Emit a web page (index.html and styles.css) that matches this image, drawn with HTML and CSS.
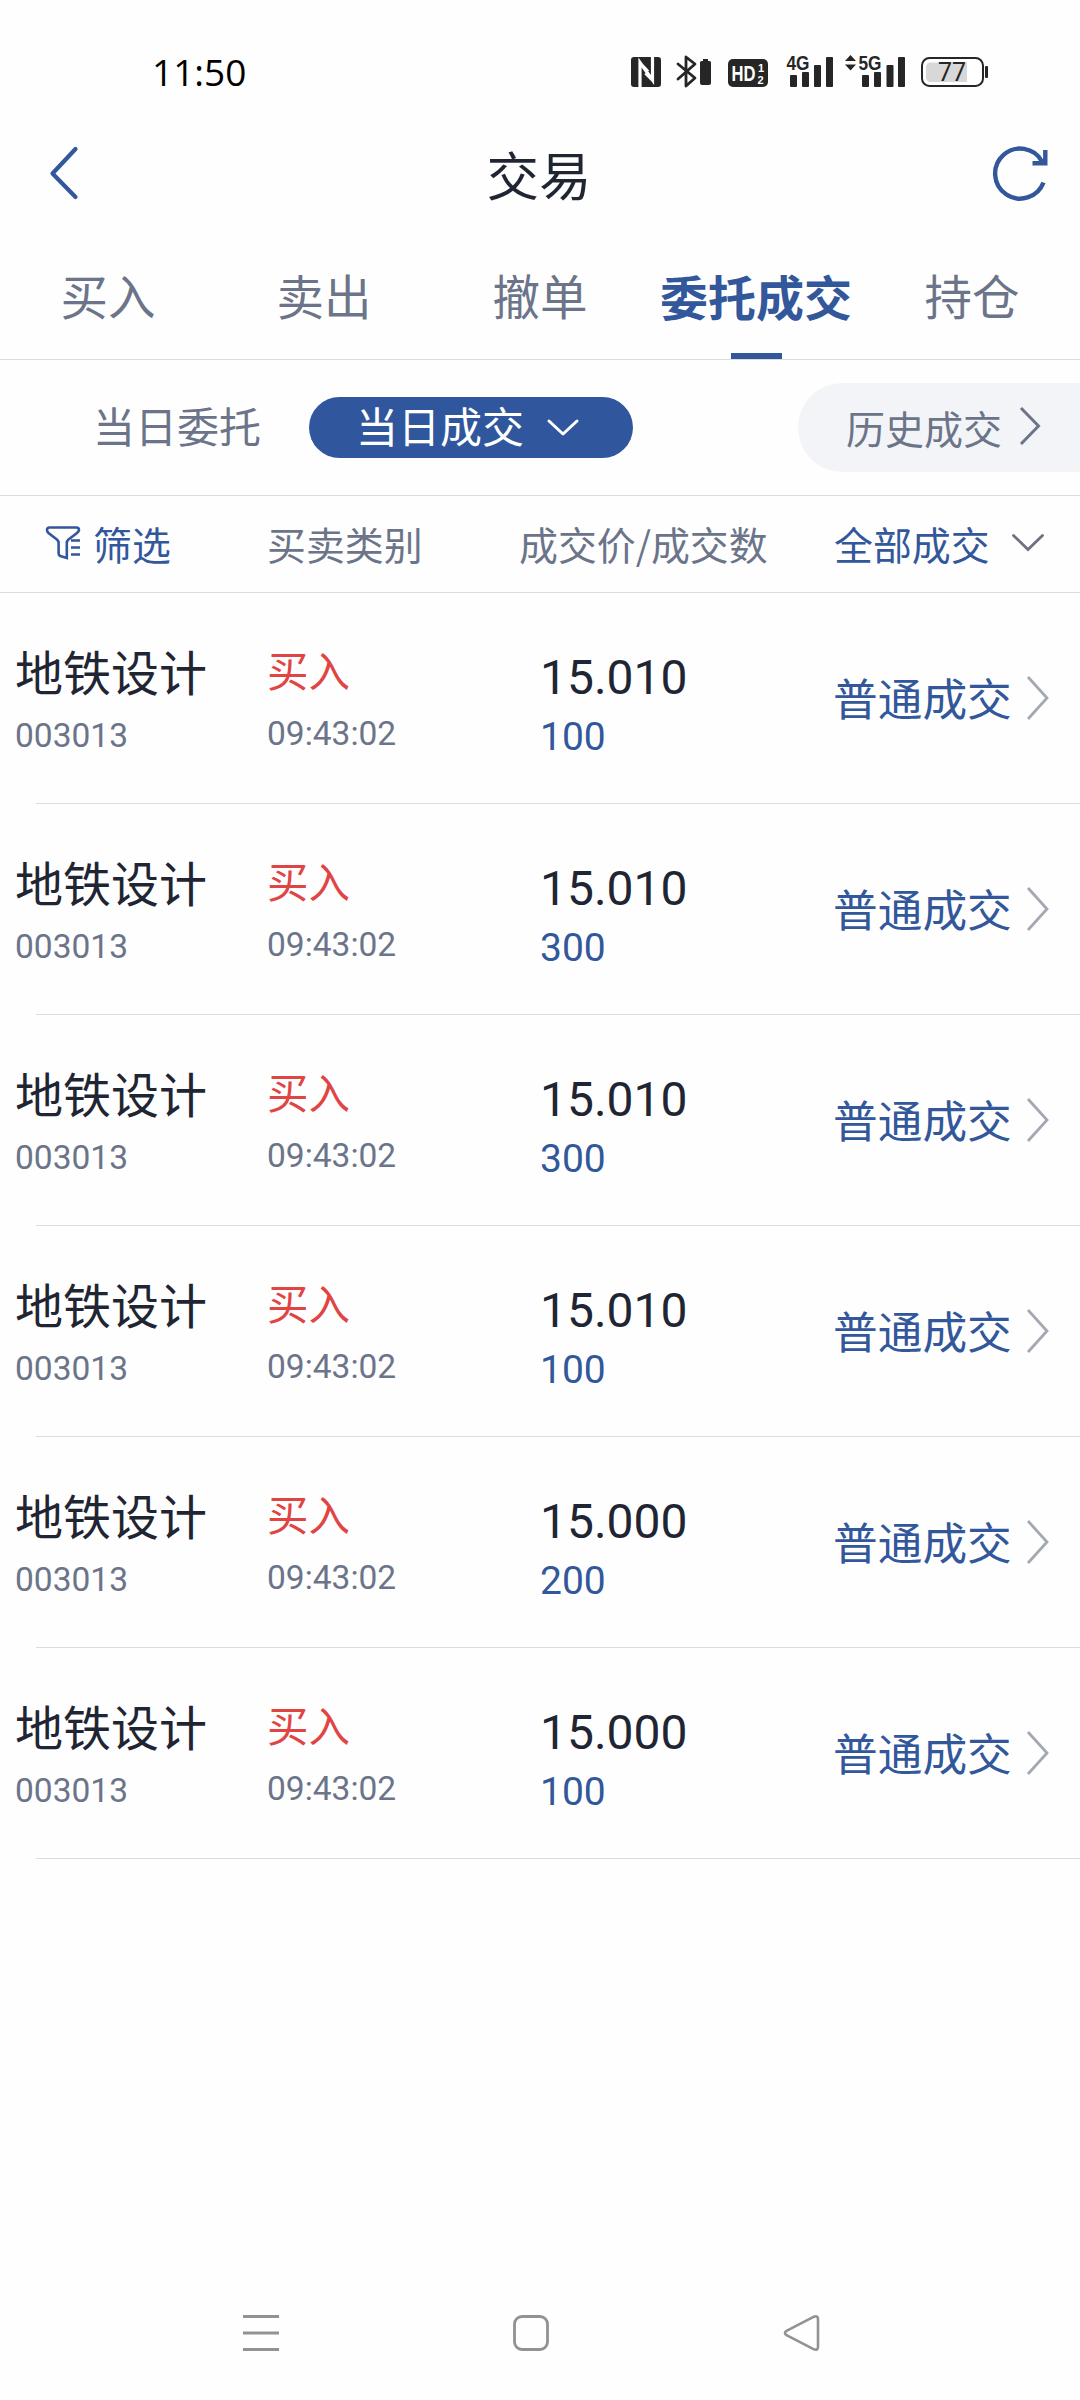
FILE: index.html
```html
<!DOCTYPE html>
<html lang="zh-CN">
<head>
<meta charset="utf-8">
<title>交易</title>
<link rel="stylesheet" href="styles.css">
</head>
<body>
<div class="screen">
  <div class="status">
    <span class="clock">11:50</span>
    <svg class="status-icons" width="360" height="38" viewBox="630 53 360 38">
      <rect x="631" y="57" width="30" height="30" rx="3" fill="#262626"/>
      <path d="M640 87V62.500l12.500 17.500V57M640 63l8 8.500M653 80.500l-7.500-7.500" fill="none" stroke="#fff" stroke-width="3.200"/>
      <path d="M678 64l17 14-9 8V57l9 7-17 15" fill="none" stroke="#262626" stroke-width="2.800" stroke-linejoin="round" stroke-linecap="round"/>
      <path d="M703 59h5v2h1.500q1.500 0 1.500 1.500v20.500q0 2-2 2h-7q-2 0-2-2v-20.500q0-1.500 1.500-1.500h1.500z" fill="#262626"/>
      <rect x="728" y="59" width="40" height="28" rx="5" fill="#262626"/>
      <text x="731.500" y="81" class="hd" textLength="24" lengthAdjust="spacingAndGlyphs">HD</text>
      <text x="758" y="71.500" class="hd-sub">1</text>
      <text x="757.500" y="83.500" class="hd-sub">2</text>
      <g fill="#262626">
        <text x="786.500" y="70" class="net" textLength="23" lengthAdjust="spacingAndGlyphs">4G</text>
        <rect x="790" y="75" width="7" height="12" rx="1"/><rect x="802" y="72" width="7" height="15" rx="1"/><rect x="814" y="65" width="7" height="22" rx="1"/><rect x="826" y="57" width="7" height="30" rx="1"/>
        <path d="M845 61l5.500-6 5.500 6zM845 64.500h11l-5.500 6z"/>
        <text x="858.500" y="70" class="net" textLength="23" lengthAdjust="spacingAndGlyphs">5G</text>
        <rect x="862" y="75" width="7" height="12" rx="1"/><rect x="874" y="72" width="7" height="15" rx="1"/><rect x="886.500" y="65" width="7" height="22" rx="1"/><rect x="898" y="57" width="7" height="30" rx="1"/>
      </g>
      <rect x="922" y="58" width="61" height="28" rx="7.500" fill="#fff" stroke="#262626" stroke-width="2"/>
      <path d="M967 62.500v19.500h-36q-5 0-5-5v-9.500q0-5 5-5z" fill="#d8d8d8"/>
      <rect x="985" y="66" width="3" height="12" rx="1" fill="#262626"/>
      <text x="952" y="81" class="charge" text-anchor="middle">77</text>
    </svg>
  </div>

  <header class="header">
    <svg class="back" width="34" height="56" viewBox="47 145.500 34 56"><path d="M75.500 148.500L52.500 173l23 23.500" fill="none" stroke="#32579b" stroke-width="4.200" stroke-linecap="round" stroke-linejoin="round"/></svg>
    <h1 class="title">交易</h1>
    <svg class="refresh" width="60" height="60" viewBox="991 144 60 60"><path d="M1043.500 182.500A25 25 0 1 1 1042 161.500M1032.500 163.300h12.800V150" fill="none" stroke="#32579b" stroke-width="4.400"/></svg>
  </header>

  <nav class="tabs">
    <span class="tab">买入</span>
    <span class="tab">卖出</span>
    <span class="tab">撤单</span>
    <span class="tab active">委托成交</span>
    <span class="tab">持仓</span>
  </nav>

  <div class="modes">
    <span class="mode">当日委托</span>
    <span class="mode current"><span>当日成交</span><svg width="34" height="20" viewBox="0 0 34 20"><path d="M3 3l14 13L31 3" fill="none" stroke="#fff" stroke-width="3" stroke-linecap="round" stroke-linejoin="round"/></svg></span>
    <span class="history"><span>历史成交</span><svg width="24" height="42" viewBox="0 0 24 42"><path d="M3 3l17.500 18L3 39" fill="none" stroke="#6b7489" stroke-width="3"/></svg></span>
  </div>

  <div class="columns">
    <span class="filter"><svg width="36" height="36" viewBox="45 526 36 36"><path d="M49.500 528.500h27q2.500 0 2.500 2.500-.3 1.500-2 3l-8.500 6.500q-1.700 1.400-1.700 3.500v15l-6.500-2q-1.700-.8-1.700-2.500v-10.500q0-2.100-1.700-3.500L48.500 534q-1.500-1.500-1.500-3 0-2.500 2.500-2.500zM71 541.500h9M71 548.500h9M71 555.500h9" fill="none" stroke="#32579b" stroke-width="2.600"/></svg>筛选</span>
    <span>买卖类别</span>
    <span class="price-head">成交价/成交数</span>
    <span class="all">全部成交<svg width="34" height="20" viewBox="0 0 34 20"><path d="M2.500 2.500l14.500 14L31.500 2.500" fill="none" stroke="#6f7180" stroke-width="2.800" stroke-linecap="round"/></svg></span>
  </div>

  <main class="list">
    <div class="row"><div class="stock"><b>地铁设计</b><i>003013</i></div><div class="side"><b>买入</b><i>09:43:02</i></div><div class="deal"><b>15.010</b><i>100</i></div><div class="kind"><span>普通成交</span><svg width="24" height="46" viewBox="0 0 24 46"><path d="M2 2l19 21L2 44" fill="none" stroke="#a3a8b3" stroke-width="2.800"/></svg></div></div>
    <div class="row"><div class="stock"><b>地铁设计</b><i>003013</i></div><div class="side"><b>买入</b><i>09:43:02</i></div><div class="deal"><b>15.010</b><i>300</i></div><div class="kind"><span>普通成交</span><svg width="24" height="46" viewBox="0 0 24 46"><path d="M2 2l19 21L2 44" fill="none" stroke="#a3a8b3" stroke-width="2.800"/></svg></div></div>
    <div class="row"><div class="stock"><b>地铁设计</b><i>003013</i></div><div class="side"><b>买入</b><i>09:43:02</i></div><div class="deal"><b>15.010</b><i>300</i></div><div class="kind"><span>普通成交</span><svg width="24" height="46" viewBox="0 0 24 46"><path d="M2 2l19 21L2 44" fill="none" stroke="#a3a8b3" stroke-width="2.800"/></svg></div></div>
    <div class="row"><div class="stock"><b>地铁设计</b><i>003013</i></div><div class="side"><b>买入</b><i>09:43:02</i></div><div class="deal"><b>15.010</b><i>100</i></div><div class="kind"><span>普通成交</span><svg width="24" height="46" viewBox="0 0 24 46"><path d="M2 2l19 21L2 44" fill="none" stroke="#a3a8b3" stroke-width="2.800"/></svg></div></div>
    <div class="row"><div class="stock"><b>地铁设计</b><i>003013</i></div><div class="side"><b>买入</b><i>09:43:02</i></div><div class="deal"><b>15.000</b><i>200</i></div><div class="kind"><span>普通成交</span><svg width="24" height="46" viewBox="0 0 24 46"><path d="M2 2l19 21L2 44" fill="none" stroke="#a3a8b3" stroke-width="2.800"/></svg></div></div>
    <div class="row"><div class="stock"><b>地铁设计</b><i>003013</i></div><div class="side"><b>买入</b><i>09:43:02</i></div><div class="deal"><b>15.000</b><i>100</i></div><div class="kind"><span>普通成交</span><svg width="24" height="46" viewBox="0 0 24 46"><path d="M2 2l19 21L2 44" fill="none" stroke="#a3a8b3" stroke-width="2.800"/></svg></div></div>
  </main>

  <footer class="system-nav">
    <svg width="38" height="40" viewBox="0 0 38 40"><path d="M1 3.500h36M1 20h36M1 36.500h36" stroke="#929292" stroke-width="3"/></svg>
    <svg width="38" height="40" viewBox="0 0 38 40"><rect x="2.500" y="3.500" width="33" height="33" rx="7.500" fill="none" stroke="#929292" stroke-width="2.800"/></svg>
    <svg width="38" height="40" viewBox="0 0 38 40"><path d="M4.500 17.800L32 3.700q4-1.400 4 2.600v27.400q0 4-4 2.600L4.500 22.200q-3-2.200 0-4.400z" fill="none" stroke="#929292" stroke-width="2.600" stroke-linejoin="round"/></svg>
  </footer>
</div>
</body>
</html>
```

FILE: styles.css
```css
* { box-sizing: border-box; }
body { margin: 0; background: #fefefe; }
svg { display: block; flex: none; }
b, i { font-weight: 400; font-style: normal; }

.screen {
  width: 1080px;
  height: 2400px;
  display: flex;
  flex-direction: column;
  overflow: hidden;
  background: #fefefe;
  color: #6b7489;
  font-family: "Noto Sans CJK SC", sans-serif;
  white-space: nowrap;
}

.status {
  height: 120px;
  padding: 53px 90px 0 152px;
  display: flex;
  justify-content: space-between;
  align-items: flex-start;
}
.clock { font: 37px/38px "Open Sans", sans-serif; color: #000; }
.hd { font: 700 22px "Liberation Sans", sans-serif; fill: #fff; }
.hd-sub { font: 700 11px "Liberation Sans", sans-serif; fill: #fff; }
.net { font: 700 21px "Liberation Sans", sans-serif; }
.charge { font: 25px Roboto, sans-serif; fill: #262626; }

.header {
  height: 108px;
  padding: 0 29px 0 47px;
  display: grid;
  grid-template-columns: 60px 1fr 60px;
  align-items: center;
}
.title {
  margin: 0;
  padding: 0 20px 2px 0;
  text-align: center;
  color: #1f2533;
  font-size: 52.500px;
  line-height: 60px;
  font-weight: 400;
}

.tabs {
  height: 132px;
  display: grid;
  grid-template-columns: repeat(5, 216px);
  border-bottom: 1px solid #dcdddf;
  font-size: 47.500px;
}
.tab {
  display: flex;
  flex-direction: column;
  align-items: center;
  justify-content: space-between;
  padding-top: 33px;
  line-height: 68px;
}
.active { color: #32579b; font-weight: 700; font-size: 48px; }
.active::after { content: ""; width: 51px; height: 6px; background: #32579b; }

.modes {
  height: 136px;
  border-bottom: 1px solid #dcdddf;
  padding-left: 93px;
  display: flex;
  align-items: center;
  font-size: 42px;
  line-height: 60px;
}
.mode { width: 216px; padding-bottom: 5px; }
.current {
  width: 324px;
  height: 61px;
  border-radius: 31px;
  padding: 0 0 0 47px;
  display: flex;
  align-items: center;
  gap: 22px;
  background: #30569d;
  color: #fff;
}
.current span { padding-bottom: 5px; }
.history {
  width: 282px;
  height: 89px;
  margin-left: auto;
  padding-left: 48px;
  border-radius: 45px 0 0 45px;
  display: flex;
  align-items: center;
  gap: 16px;
  background: #f3f4f7;
  font-size: 39px;
}
.history span { padding-bottom: 2px; }
.history svg { margin-top: -4px; }

.columns {
  height: 97px;
  padding-bottom: 2px;
  border-bottom: 1px solid #dcdddf;
  display: grid;
  grid-template-columns: 267px 252px 315px 1fr;
  align-items: center;
  font-size: 38.900px;
  line-height: 60px;
}
.filter, .all { display: flex; align-items: center; color: #32579b; }
.filter { padding-left: 45px; gap: 12px; }
.all { gap: 21px; }

.list { height: 1266px; }
.row {
  height: 211px;
  display: grid;
  grid-template-columns: 231px 273px 293px 1fr;
  margin-left: 36px;
  border-bottom: 1px solid #dcdddf;
}
.row b, .row i { display: block; }
.row i { font-family: Roboto, sans-serif; font-size: 33.500px; line-height: 40px; }
.stock { margin-left: -21px; padding-top: 47px; }
.stock b { font-size: 48px; line-height: 60px; color: #1f2533; }
.stock i { margin-top: 16px; }
.side { padding-top: 46px; }
.side b { font-size: 41.500px; line-height: 60px; color: #e04443; }
.side i { margin-top: 15px; }
.deal { padding-top: 55px; }
.deal b { font: 48px/60px Roboto, sans-serif; color: #1f2533; }
.deal i { font-size: 39px; margin-top: 9px; color: #32579b; }
.kind {
  display: flex;
  align-items: center;
  gap: 14px;
  color: #32579b;
  font-size: 44.700px;
  height: 210px;
}
.kind span { padding-bottom: 4px; }

.system-nav {
  margin-top: auto;
  height: 87px;
  padding: 0 260px 0 242px;
  display: flex;
  justify-content: space-between;
  align-items: flex-start;
}
```
